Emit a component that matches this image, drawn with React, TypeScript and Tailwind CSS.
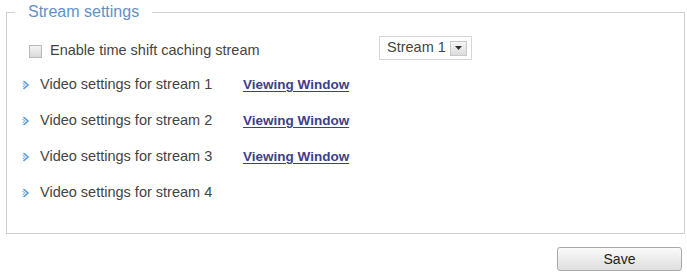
import React from "react";

const Arrow = () => (
  <svg width="8" height="10" viewBox="0 0 8 10" className="shrink-0">
    <path d="M1.5 1 L6 5 L1.5 9" fill="none" stroke="#5b9bd8" strokeWidth="1.6" />
    <path d="M0.5 3 L3 5 L0.5 7" fill="none" stroke="#9cc4ea" strokeWidth="1.2" />
  </svg>
);

const rows = [
  { label: "Video settings for stream 1", link: true },
  { label: "Video settings for stream 2", link: true },
  { label: "Video settings for stream 3", link: true },
  { label: "Video settings for stream 4", link: false },
];

export default function App() {
  return (
    <div
      className="w-[687px] h-[275px] bg-white text-[#444]"
      style={{ fontFamily: '"Liberation Sans", Arial, sans-serif' }}
    >
      <fieldset className="ml-[6px] w-[679px] border border-[#cfcfcf] pb-[22px]">
        <legend className="ml-[8px] px-[13px] text-[16px] leading-[24px] text-[#5f91c9]">
          Stream settings
        </legend>
        <div className="mt-[14px] flex h-[26px] items-center pl-[22px]">
          <div className="flex w-[350px] items-center">
            <span className="h-[13px] w-[13px] border border-[#b9b9b9] bg-gradient-to-b from-[#f4f4f4] to-[#d9d9d9]" />
            <span className="ml-[8px] text-[14.5px]">Enable time shift caching stream</span>
          </div>
          <div className="-mt-[6px] flex h-[24px] w-[93px] items-center justify-between border border-[#d6d6d6] bg-white pl-[7px] pr-[4px]">
            <span className="text-[14.5px] text-[#444]">Stream 1</span>
            <span className="flex h-[15px] w-[17px] items-center justify-center border border-[#c8c8c8] bg-gradient-to-b from-[#f6f6f6] to-[#dcdcdc]">
              <svg width="7" height="4" viewBox="0 0 7 4">
                <path d="M0 0 H7 L3.5 4 Z" fill="#333" />
              </svg>
            </span>
          </div>
        </div>
        <div className="mt-[3px] flex flex-col pl-[15px]">
          {rows.map((r) => (
            <div key={r.label} className="flex h-[36px] items-center">
              <Arrow />
              <span className="ml-[10px] w-[203px] text-[14.5px]">{r.label}</span>
              {r.link && (
                <span className="text-[13.5px] font-bold text-[#3c3f8c] underline underline-offset-2">
                  Viewing Window
                </span>
              )}
            </div>
          ))}
        </div>
      </fieldset>
      <div className="mt-[13px] flex justify-end pr-[5px]">
        <button className="h-[24px] w-[125px] rounded-[3px] border border-[#a9a9a9] bg-gradient-to-b from-[#fbfbfb] to-[#dedede] text-[14px] text-[#222]">
          Save
        </button>
      </div>
    </div>
  );
}
